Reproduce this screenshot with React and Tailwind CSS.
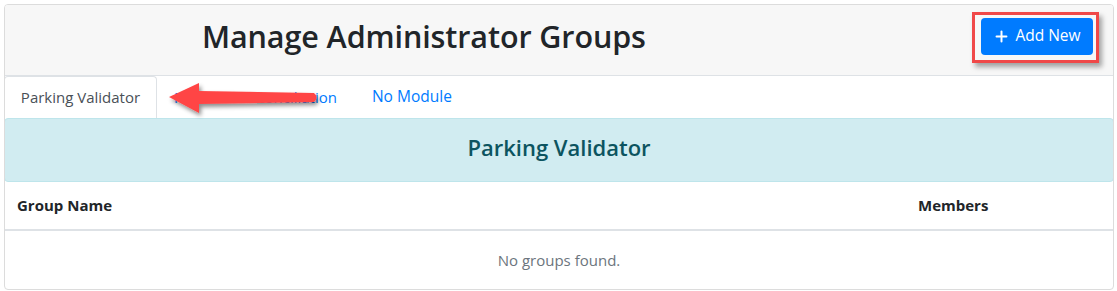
import { Plus } from 'lucide-react';

const font = { fontFamily: '"Open Sans", "Noto Sans", sans-serif' };

// Red annotation arrow drawn over the tab strip
function Arrow() {
  return (
    <svg className="absolute left-[164px] top-[79px] pointer-events-none" width="164" height="42" viewBox="0 0 164 42">
      <defs>
        <filter id="sh" x="-10%" y="-30%" width="130%" height="180%">
          <feDropShadow dx="2" dy="3" stdDeviation="2" floodColor="#000" floodOpacity="0.45" />
        </filter>
      </defs>
      <path
        d="M5 18 L35 4 L35 12 L150 14 Q155 18 150 23 L35 25 L35 34 Z"
        fill="#ff4545"
        filter="url(#sh)"
      />
    </svg>
  );
}

export default function App() {
  return (
    <div className="w-[1117px] h-[291px] bg-white relative overflow-hidden" style={font}>
      <div className="absolute left-[4px] top-[4px] w-[1110px] h-[286px] border border-[#dcdcdc] rounded-[4px] overflow-hidden flex flex-col">
        {/* header */}
        <div className="h-[71px] shrink-0 bg-[#f7f7f7] border-b border-[#dee2e6] flex items-center">
          <h2 className="pl-[197px] text-[30.5px] font-semibold text-[#212529] tracking-[-0.1px] leading-none pb-[7px]">
            Manage Administrator Groups
          </h2>
          <div className="ml-auto mr-[20px] mb-[8px] relative">
            <button className="w-[112px] h-[37px] bg-[#007bff] text-white rounded-[4px] flex items-center justify-center gap-[5px] text-[15.5px]">
              <Plus size={17} strokeWidth={2.8} />
              <span>Add New</span>
            </button>
            <div className="absolute -left-[9px] -top-[6px] w-[127px] h-[51px] border-[3px] border-[#f04848] shadow-[3px_4px_5px_rgba(0,0,0,0.35)]"></div>
          </div>
        </div>

        {/* tabs */}
        <div className="h-[42px] shrink-0 flex items-stretch text-[15px]">
          <div className="w-[153px] border border-b-0 border-[#dee2e6] rounded-t-[4px] bg-white flex items-center justify-center text-[#495057] -ml-px">
            Parking Validator
          </div>
          <div className="pl-[17px] pr-[19px] flex items-center text-[#007bff]">Payment Reconciliation</div>
          <div className="px-[16px] flex items-center text-[#007bff] text-[15.5px]">No Module</div>
        </div>

        {/* alert band */}
        <div className="h-[64px] shrink-0 bg-[#d1ecf1] border border-[#bee5eb] rounded-[4px] flex items-center justify-center -mx-px">
          <span className="text-[22px] font-semibold text-[#0c5460] pb-[5px]">Parking Validator</span>
        </div>

        {/* table */}
        <div className="flex h-[49px] shrink-0 items-center border-b-2 border-[#dee2e6] text-[15px] font-bold text-[#212529]">
          <div className="flex-1 pl-[12px]">Group Name</div>
          <div className="w-[207px] pl-[12px]">Members</div>
        </div>
        <div className="flex-1 flex items-center justify-center text-[15px] text-[#6c757d]">
          No groups found.
        </div>
      </div>
      <Arrow />
    </div>
  );
}
